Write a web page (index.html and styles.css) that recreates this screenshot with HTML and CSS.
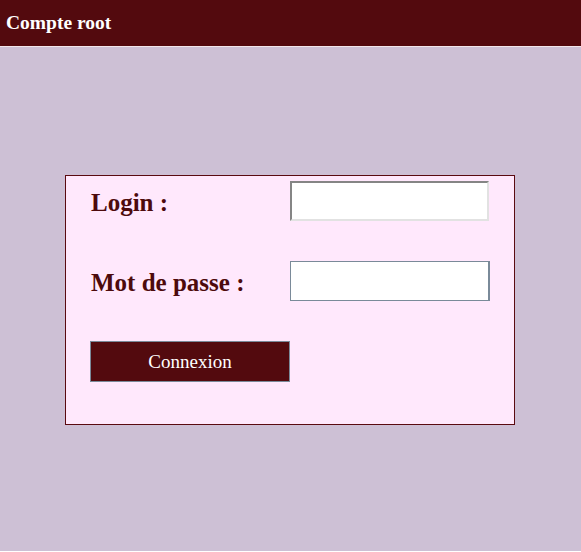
FILE: index.html
```html
<!DOCTYPE html>
<html lang="fr">
<head>
<meta charset="utf-8">
<title>Compte root</title>
<link rel="stylesheet" href="styles.css">
</head>
<body>
<header class="topbar">Compte root</header>
<main class="stage">
  <form class="login-box">
    <div class="grid">
      <label class="lbl" for="login">Login :</label>
      <input class="field field-inset" id="login" type="text">
      <label class="lbl" for="pass">Mot de passe :</label>
      <input class="field field-flat" id="pass" type="password">
      <button class="btn" type="button">Connexion</button>
    </div>
  </form>
</main>
<p class="foot">Retour à la page d'accueil du site</p>
</body>
</html>
```
FILE: styles.css
```css
html, body {
  margin: 0;
  padding: 0;
  background: #ffffff;
  font-family: "Liberation Serif", "Times New Roman", serif;
}
.topbar {
  box-sizing: border-box;
  height: 47px;
  background: #530a0e;
  color: #ffffff;
  font-weight: bold;
  font-size: 19.5px;
  line-height: 46px;
  padding-left: 6px;
  border-bottom: 1px solid #f2e6ea;
}
.stage {
  background: #cdc0d5;
  height: 504px;
  box-sizing: border-box;
  padding-top: 128px;
  padding-left: 65px;
}
.login-box {
  width: 450px;
  height: 250px;
  box-sizing: border-box;
  border: 1px solid #5a0a10;
  background: #ffe8fc;
  padding: 5px 0 0 24px;
}
.grid {
  display: grid;
  grid-template-columns: 200px 200px;
  grid-auto-rows: 40px;
  row-gap: 40px;
  align-items: center;
}
.lbl {
  font-weight: bold;
  font-size: 25px;
  color: #4d0a0c;
  padding-left: 1px;
  position: relative;
  top: 2px;
}
.field {
  box-sizing: border-box;
  width: 199px;
  height: 40px;
  margin: 0;
  background: #ffffff;
  font-family: "Liberation Serif", serif;
  font-size: 16px;
}
.field-inset {
  border-style: solid;
  border-width: 2px;
  border-top-color: #858585;
  border-left-color: #858585;
  border-right-color: #e2e2e2;
  border-bottom-color: #e2e2e2;
}
.field-flat {
  width: 200px;
  border: 1px solid #7a8a99;
  border-right-width: 2px;
}
.btn {
  box-sizing: border-box;
  width: 200px;
  height: 41px;
  margin: 0;
  background: #530a0e;
  color: #ffffff;
  border: 1px solid #7a8a99;
  font-family: "Liberation Serif", serif;
  font-size: 19px;
  padding: 0;
  padding-top: 2px;
}
.foot {
  margin: 4px 0 0 75px;
  font-size: 20px;
  color: #000000;
}
```
